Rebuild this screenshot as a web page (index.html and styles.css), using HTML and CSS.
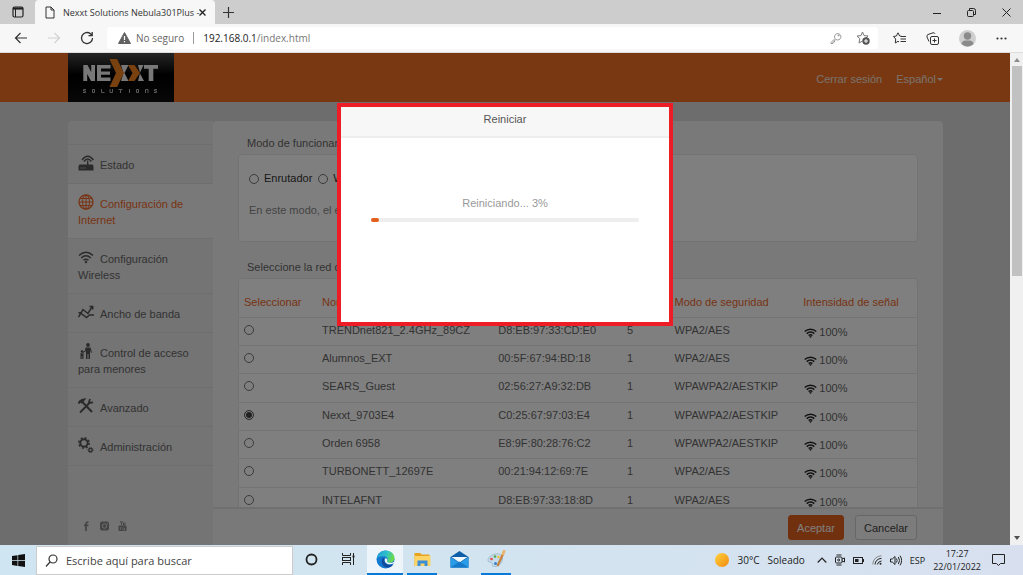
FILE: index.html
```html
<!DOCTYPE html>
<html lang="es">
<head>
<meta charset="utf-8">
<title>Nexxt Solutions Nebula301Plus</title>
<link rel="stylesheet" href="styles.css">
</head>
<body>
<svg class="defs" aria-hidden="true">
  <symbol id="wifi" viewBox="0 0 13 10">
    <path d="M.7 3.500C4 .4 9 .4 12.300 3.500M2.700 5.600c2.200-2 5.400-2 7.600 0M4.600 7.500c1.200-1 2.600-1 3.800 0" fill="none" stroke="currentColor" stroke-width="1.500"/>
    <path d="M5 8.300 6.500 10 8 8.300z" fill="currentColor"/>
  </symbol>
</svg>

<header class="tabstrip">
  <button class="strip-btn" aria-label="Menú de pestañas">
    <svg width="12" height="12" viewBox="0 0 12 12" fill="none" stroke="#222"><rect x="1" y="1" width="10" height="10" rx="1.500" stroke-width="1.200"/><path d="M1 2.500h10" stroke-width="2.200"/><path d="M3.500 3v8" stroke-width="1"/></svg>
  </button>
  <div class="tab">
    <svg width="10" height="13" viewBox="0 0 10 13" fill="none" stroke="#333"><path d="M1 1h5l3 3v8H1zM6 1v3h3"/></svg>
    <span class="tab-title">Nexxt Solutions Nebula301Plus -</span>
    <button class="tab-close" aria-label="Cerrar pestaña"><svg width="7" height="7" viewBox="0 0 7 7" stroke="#222" stroke-width="1.400"><path d="M.5.5l6 6M6.500.5l-6 6"/></svg></button>
  </div>
  <button class="new-tab" aria-label="Nueva pestaña"><svg width="11" height="11" viewBox="0 0 11 11" stroke="#333" stroke-width="1.200"><path d="M5.500 0v11M0 5.500h11"/></svg></button>
  <div class="window-buttons">
    <button aria-label="Minimizar"><svg width="8" height="9" viewBox="0 0 8 9" stroke="#222"><path d="M0 5.500h8"/></svg></button>
    <button aria-label="Restaurar"><svg width="9" height="9" viewBox="0 0 9 9" fill="none" stroke="#222"><rect x=".5" y="2.500" width="6" height="6" rx="1"/><path d="M2.500 2V.5h4q2 0 2 2v4H7"/></svg></button>
    <button aria-label="Cerrar"><svg width="9" height="9" viewBox="0 0 9 9" stroke="#222"><path d="M.5.5l8 8M8.500.5l-8 8"/></svg></button>
  </div>
</header>

<nav class="toolbar" aria-label="Navegación">
  <button aria-label="Atrás"><svg width="14" height="12" viewBox="0 0 14 12" fill="none" stroke="#333" stroke-width="1.200"><path d="M13 6H1.500M6.500 1l-5 5 5 5"/></svg></button>
  <button aria-label="Adelante"><svg width="14" height="12" viewBox="0 0 14 12" fill="none" stroke="#d2d2d2" stroke-width="1.200"><path d="M1 6h11.500M7.500 1l5 5-5 5"/></svg></button>
  <button aria-label="Actualizar"><svg width="14" height="14" viewBox="0 0 14 14" fill="none" stroke="#333" stroke-width="1.300"><path d="M12.500 7A5.500 5.500 0 1 1 10.500 2.800L12 4.500M12.200 1v3.700H8.500"/></svg></button>
  <div class="address">
    <svg width="13" height="12" viewBox="0 0 13 12"><path d="M6.500.5 12.500 11.500H.5z" fill="#616161" stroke="#616161" stroke-linejoin="round"/><path d="M6.500 4v4M6.500 9v1.300" stroke="#fff" stroke-width="1.200"/></svg>
    <span class="insecure">No seguro</span>
    <span class="divider"></span>
    <span class="url"><b>192.168.0.1</b>/index.html</span>
    <button class="key" aria-label="Contraseñas"><svg width="12" height="12" viewBox="0 0 12 12" fill="none" stroke="#999"><path d="M5 6.500 1 10.500v1h2v-1.500h1.500V8.500L6 7.500a3.200 3.200 0 1 0-1-1z"/><circle cx="8.600" cy="3.500" r=".6"/></svg></button>
    <button aria-label="Agregar a favoritos"><svg width="14" height="14" viewBox="0 0 14 14"><path d="M6.500 1l1.600 3.600 4 .4-3 2.700M6.500 10 3 12l.8-4.300L1 5l4-.4L6.500 1" fill="none" stroke="#777"/><circle cx="10" cy="10" r="3.700" fill="#555"/><path d="M10 8v4M8 10h4" stroke="#fff"/></svg></button>
  </div>
  <button class="tool" aria-label="Favoritos"><svg width="13" height="13" viewBox="0 0 13 13" fill="none" stroke="#333"><path d="M9 4.500 6.700 4 5 .8 3.400 4 .5 4.500 2.700 7l-.4 4L5 9.300l1 .6M8 4.500h5M7.500 7H13M7.500 9.500H13"/></svg></button>
  <button class="tool" aria-label="Colecciones"><svg width="13" height="13" viewBox="0 0 13 13" fill="none" stroke="#333"><rect x="4.500" y="4.500" width="8" height="8" rx="1.500"/><path d="M8.500 6.500v4M6.500 8.500h4M3 9.500 1 5Q.5 3 2 2.500L7 .8q1.300-.4 2 1"/></svg></button>
  <button class="tool" aria-label="Perfil"><svg width="17" height="17" viewBox="0 0 17 17"><circle cx="8.500" cy="8.500" r="8.500" fill="#cfcfcf"/><circle cx="8.500" cy="6" r="3.700" fill="#8a8a8a"/><path d="M2.500 14q.5-3.500 4-3.500h4q3.500 0 4 3.500a8.500 8.500 0 0 1-12 0z" fill="#8a8a8a"/></svg></button>
  <button class="tool" aria-label="Más"><svg width="11" height="3" viewBox="0 0 11 3" fill="#333"><circle cx="1.500" cy="1.500" r="1.100"/><circle cx="5.500" cy="1.500" r="1.100"/><circle cx="9.500" cy="1.500" r="1.100"/></svg></button>
</nav>

<div class="viewport">
  <div class="page">
    <header class="site-header">
      <div class="logo" role="img" aria-label="Nexxt Solutions">
        <svg width="78" height="38" viewBox="0 0 78 38">
          <g fill="#f0f0f0">
            <path d="M1.300 22V6h4.200l3.700 7V6H13v16H9l-3.800-7v7z"/>
            <path d="M15 6h13.500v3.600H19v2.800h9v3.400h-9v2.700h9.500V22H15z"/>
            <path d="M39 6h7.500l-4 8 4 8H39l2.500-8z"/>
            <path d="M56 6h5.500l-3.700 8 4.200 8h-6l2-8z"/>
            <path d="M62 6h14v3.700h-4.700V22h-4.600V9.700H62z"/>
          </g>
          <path d="M27.500 0H35l7 14-7 14h-7.500l6.500-14z" fill="#f58220"/>
          <path d="M46 6h6.500l5.500 8-5.500 8H46l4.500-8z" fill="#f58220"/>
          <g fill="none" stroke="#b0b0b0" stroke-width="1"><path d="M4 30.500H1.500v1.500h2v1.500H1M10.500 30.500h2v3h-2zM19.500 30v3.500h3M28 30v3.500h2.500V30M36.500 30.500h4M38.500 30.500V34M47.500 30v4M54.500 30.500h2v3h-2zM63.500 34v-3.500h2.500V34M75 30.500h-2.500v1.500h2v1.500H72"/></g>
        </svg>
      </div>
      <nav class="site-links"><a href="#">Cerrar sesión</a><a href="#">Español<i class="caret"></i></a></nav>
    </header>

    <div class="panel">
      <aside class="sidebar">
        <nav class="menu">
          <a href="#"><svg width="16" height="16" viewBox="0 0 16 16"><path d="M1.500 9.500h13l1 1.500v4.500H.5V11zM9 5.500h1.400v5H9z" fill="#555"/><path d="M2.500 13h5" stroke="#ddd" stroke-dasharray="1"/><path d="M6 6.500Q9.700 1.500 13.400 6.500M4 5Q9.700-2.500 15.400 5" stroke="#555" fill="none" stroke-width="1.500"/></svg>Estado</a>
          <a href="#" class="active"><svg width="16" height="16" viewBox="0 0 16 16" fill="none" stroke="#f0682a"><circle cx="8" cy="8" r="7" stroke-width="1.300"/><ellipse cx="8" cy="8" rx="3.500" ry="7"/><path d="M8 1v14M1 8h14M2 4.500h12M2 11.500h12"/></svg>Configuración de Internet</a>
          <a href="#"><svg width="16" height="16" viewBox="0 0 16 16"><path d="M1 6.500q7-6.500 14 0M3.200 9q4.800-4.500 9.600 0M5.500 11.300q2.500-2.200 5 0" fill="none" stroke="#555" stroke-width="1.500"/><circle cx="8" cy="13" r="1.200" fill="#555"/></svg>Configuración Wireless</a>
          <a href="#"><svg width="16" height="16" viewBox="0 0 16 16" fill="none" stroke="#555" stroke-width="1.500"><path d="M.5 13 5 5.500l5 4 4.500-7.500M11.500 2.500h3.200v3M.5 8.500 3 9.500l5.500 4 3-2.500H16"/></svg>Ancho de banda</a>
          <a href="#"><svg width="16" height="16" viewBox="0 0 16 16" fill="#555"><circle cx="10" cy="2" r="1.900"/><path d="M7.500 4.500h5l1.500 5-1 .3-1-2.800V16h-1.500v-5h-1v5H8V8L5 10l-.5-1L7 7.500z"/><circle cx="4" cy="8.500" r="1.300"/><path d="M2.500 10.200h3V16H4.300v-3h-.6v3H2.500z"/></svg>Control de acceso para menores</a>
          <a href="#"><svg width="16" height="16" viewBox="0 0 16 16" fill="none" stroke="#555"><path d="M4 3.500 14 14" stroke-width="2"/><path d="M.5 5.500Q2 2 6 1.500L3 5" stroke-width="2"/><path d="M2 14.500 11 5.500" stroke-width="1.800"/><path d="M12 1 10.700 5l4.300-.7" stroke-width="1.800"/></svg>Avanzado</a>
          <a href="#"><svg width="16" height="16" viewBox="0 0 16 16" fill="none" stroke="#555"><circle cx="6" cy="6" r="3.700" stroke-width="2"/><circle cx="6" cy="6" r="5.200" stroke-width="1.500" stroke-dasharray="2 2.080"/><circle cx="12.500" cy="13" r="1.700" stroke-width="1.300"/><circle cx="12.500" cy="13" r="2.500" stroke-dasharray="1 .96"/></svg>Administración</a>
        </nav>
        <div class="social">
          <a href="#" aria-label="Facebook"><svg width="9" height="10" viewBox="0 0 9 10" fill="none" stroke="#888" stroke-width="1.700"><path d="M4 10V3Q4 1 6.500 1M2 4.300h4.500"/></svg></a>
          <a href="#" aria-label="Instagram"><svg width="9" height="10" viewBox="0 0 9 10"><rect y=".5" width="9" height="9" rx="2" fill="#888"/><circle cx="4.500" cy="5" r="2.200" fill="none" stroke="#ddd"/><circle cx="7.200" cy="2.500" r=".6" fill="#ddd"/></svg></a>
          <a href="#" aria-label="YouTube"><svg width="9" height="10" viewBox="0 0 9 10"><rect x=".5" y="4.500" width="8" height="5.500" rx="1" fill="#888"/><path d="M2.500 0 3.500 2.500V4M4.500 0l-1 2.500M5.500 1.500V4H7V1.500" stroke="#888" fill="none"/><path d="M2.500 6v3M5 6v3h1.500V7" stroke="#ddd" fill="none" stroke-width=".7"/></svg></a>
        </div>
      </aside>

      <main class="content">
        <div class="scroll">
          <h2>Modo de funcionamiento</h2>
          <section class="card mode">
            <div class="radios">
              <label><input type="radio" name="mode">Enrutador</label>
              <label><input type="radio" name="mode">WISP</label>
            </div>
            <p>En este modo, el enrutador</p>
          </section>
          <h2>Seleccione la red deseada</h2>
          <section class="card">
            <table>
              <colgroup><col class="c-select"><col class="c-name"><col class="c-mac"><col class="c-channel"><col class="c-mode"><col></colgroup>
              <thead><tr><th>Seleccionar</th><th>Nombre</th><th>MAC</th><th>Canal</th><th>Modo de seguridad</th><th>Intensidad de señal</th></tr></thead>
              <tbody>
                <tr><td><input type="radio" name="net" aria-label="TRENDnet821_2.4GHz_89CZ"></td><td>TRENDnet821_2.4GHz_89CZ</td><td>D8:EB:97:33:CD:E0</td><td>5</td><td>WPA2/AES</td><td class="signal"><svg><use href="#wifi"/></svg>100%</td></tr>
                <tr><td><input type="radio" name="net" aria-label="Alumnos_EXT"></td><td>Alumnos_EXT</td><td>00:5F:67:94:BD:18</td><td>1</td><td>WPA2/AES</td><td class="signal"><svg><use href="#wifi"/></svg>100%</td></tr>
                <tr><td><input type="radio" name="net" aria-label="SEARS_Guest"></td><td>SEARS_Guest</td><td>02:56:27:A9:32:DB</td><td>1</td><td>WPAWPA2/AESTKIP</td><td class="signal"><svg><use href="#wifi"/></svg>100%</td></tr>
                <tr><td><input type="radio" name="net" aria-label="Nexxt_9703E4" checked></td><td>Nexxt_9703E4</td><td>C0:25:67:97:03:E4</td><td>1</td><td>WPAWPA2/AESTKIP</td><td class="signal"><svg><use href="#wifi"/></svg>100%</td></tr>
                <tr><td><input type="radio" name="net" aria-label="Orden 6958"></td><td>Orden 6958</td><td>E8:9F:80:28:76:C2</td><td>1</td><td>WPAWPA2/AESTKIP</td><td class="signal"><svg><use href="#wifi"/></svg>100%</td></tr>
                <tr><td><input type="radio" name="net" aria-label="TURBONETT_12697E"></td><td>TURBONETT_12697E</td><td>00:21:94:12:69:7E</td><td>1</td><td>WPA2/AES</td><td class="signal"><svg><use href="#wifi"/></svg>100%</td></tr>
                <tr><td><input type="radio" name="net" aria-label="INTELAFNT"></td><td>INTELAFNT</td><td>D8:EB:97:33:18:8D</td><td>1</td><td>WPA2/AES</td><td class="signal"><svg><use href="#wifi"/></svg>100%</td></tr>
              </tbody>
            </table>
          </section>
        </div>
        <footer class="actions">
          <button class="btn primary">Aceptar</button>
          <button class="btn">Cancelar</button>
        </footer>
      </main>
    </div>

    <div class="overlay">
      <div class="modal" role="dialog" aria-labelledby="dlg-title">
        <h1 id="dlg-title">Reiniciar</h1>
        <div class="modal-body">
          <p>Reiniciando... 3%</p>
          <div class="progress"><div class="bar" style="width:3%"></div></div>
        </div>
      </div>
    </div>
  </div>
  <div class="scrollbar">
    <svg width="6" height="4" viewBox="0 0 6 4"><path d="M0 4 3 0l3 4z" fill="#8c8c8c"/></svg>
    <div class="track"><div class="thumb"></div></div>
    <svg width="6" height="4" viewBox="0 0 6 4"><path d="M0 0 3 4l3-4z" fill="#505050"/></svg>
  </div>
</div>

<footer class="taskbar">
  <button class="start" aria-label="Inicio"><svg width="13" height="13" viewBox="0 0 13 13" fill="#111"><path d="M0 2 5.500 1.200v5H0zM6.200 1.100 13 0v6.200H6.200zM0 6.900h5.500v5L0 11.100zM6.200 6.900H13V13l-6.800-1z"/></svg></button>
  <label class="search">
    <svg width="13" height="13" viewBox="0 0 13 13" fill="none" stroke="#333" stroke-width="1.200"><circle cx="8" cy="5" r="4"/><path d="M5 8 1 12.500"/></svg>
    <input type="text" placeholder="Escribe aquí para buscar" aria-label="Buscar">
  </label>
  <div class="apps">
    <button class="app" aria-label="Cortana"><svg width="13" height="13" viewBox="0 0 13 13" fill="none" stroke="#222" stroke-width="1.800"><circle cx="6.500" cy="6.500" r="5"/></svg></button>
    <button class="app" aria-label="Vista de tareas"><svg width="13" height="12" viewBox="0 0 13 12" fill="none" stroke="#222"><path d="M.5 0v2.500h8V0M.5 12V9.500h8V12M11.500 0v12"/><rect x=".5" y="4.500" width="8" height="3"/><path d="M10.500 3.500h2" stroke-width="2"/></svg></button>
    <button class="app open current" aria-label="Microsoft Edge"><svg width="19" height="19" viewBox="0 0 19 19"><defs><linearGradient id="eg" x1="0" y1="0" x2="1" y2=".3"><stop offset="0" stop-color="#2196dc"/><stop offset=".6" stop-color="#2fc2c8"/><stop offset="1" stop-color="#69d94c"/></linearGradient></defs><circle cx="9.500" cy="9.500" r="9" fill="#1478cf"/><path d="M.6 8.800C1.500 3.500 5 .5 9.700.5c5 0 8.800 3.700 8.800 7.500 0 3-2.300 4.700-5 4.700-2 0-3-.8-2.400-1.600 1.300-1.800.4-4.600-2.700-4.900C4.700 5.900 1.500 7 .6 8.800z" fill="url(#eg)"/><path d="M6.800 8C4 12 7 17.200 11.500 17.500c2.600.1 4.700-1 6-3.500-3 1.600-7.200 1-8.700-1.500-.9-1.500-.7-3-.1-3.900z" fill="#134a9e"/><path d="M9.300 8.300C8.300 10 8.500 12.300 11 13.700c2.200 1 4.900.8 7-.5l.8-2c-1.500 1.300-3.300 1.800-5.300 1.500-2-.2-3-.8-2.400-1.600.8-1.200 0-2.800-1.800-2.800z" fill="#eef6fa"/></svg></button>
    <button class="app open" aria-label="Explorador de archivos"><svg width="17" height="15" viewBox="0 0 17 15"><path d="M.5 1h6l1 1.500h8V14H.5z" fill="#e8a420"/><path d="M.5 4h16v10H.5z" fill="#fdd566"/><path d="M3.500 14V8.500h10V14h-3v-2.500h-4V14z" fill="#3a8fd8"/></svg></button>
    <button class="app" aria-label="Correo"><svg width="19" height="17" viewBox="0 0 19 17"><path d="M.5 6 9.500 0l9 6v10.500H.5z" fill="#0f5ea8"/><path d="M.5 6l9 6 9-6v10.500H.5z" fill="#2a9be6"/><path d="M1.500 6h16L9.500 11.500z" fill="#f2f9fd"/><path d="M.5 16.500 9.500 10.500l9 6z" fill="#1679c9"/></svg></button>
    <button class="app open" aria-label="Paint"><svg width="19" height="18" viewBox="0 0 19 18"><path d="M8 4c5-1 8 1.500 7.500 5.500S11 17 6.500 16.500C4 16 6.500 13 4.500 12.500S.5 12 1 9.500 4 5 8 4z" fill="#c5dcec" stroke="#89a9c0" stroke-width=".6"/><circle cx="4.500" cy="9" r="1.300" fill="#e34f45"/><circle cx="8" cy="6.500" r="1.300" fill="#57a74a"/><circle cx="11.500" cy="7" r="1.200" fill="#f0c22e"/><circle cx="8.500" cy="13.500" r="1.500" fill="#3b7fc8"/><path d="M16.500 3 10.500 16" stroke="#c5813d" stroke-width="2.200"/><path d="M17.500 0 15.500 5" stroke="#e9b36c" stroke-width="2.600"/></svg></button>
  </div>
  <div class="tray">
    <svg class="sun" width="14" height="14" viewBox="0 0 14 14"><defs><linearGradient id="sg" x1="0" y1="0" x2="1" y2="1"><stop stop-color="#ffd23c"/><stop offset="1" stop-color="#f28a12"/></linearGradient></defs><circle cx="7" cy="7" r="7" fill="url(#sg)"/></svg>
    <span class="weather"><span>30°C</span><span>Soleado</span></span>
    <svg width="10" height="6" viewBox="0 0 10 6" fill="none" stroke="#222" stroke-width="1.200"><path d="M.7 5.500 5 1l4.300 4.500"/></svg>
    <svg width="10" height="12" viewBox="0 0 10 12" fill="none" stroke="#222"><rect x=".5" y="3" width="6.500" height="6" rx="1"/><path d="M7 5l2.500-1v4L7 7M1.500 1h5M1.500 11h5"/><circle cx="3.700" cy="6" r="1"/></svg>
    <svg width="11" height="7" viewBox="0 0 11 7"><rect x=".5" y=".5" width="9" height="6" fill="none" stroke="#222"/><path d="M2 2h3.500v3H2zM10 2h1v3h-1z" fill="#222"/></svg>
    <svg width="10" height="10" viewBox="0 0 10 10" fill="none"><path d="M.7 9.500Q1.500 1.500 9.500.7" stroke="#888"/><path d="M3 9.500Q3.500 4 9.500 3.300M5.300 9.500q.5-3 4.200-3.500" stroke="#222"/><circle cx="8.500" cy="8.700" r="1" fill="#222"/></svg>
    <svg width="12" height="11" viewBox="0 0 12 11" fill="none" stroke="#222"><path d="M.5 4v3h1.800L5 9.500v-8L2.300 4zM6.500 3.500q1.300 2 0 4M8.300 2q2.500 3.500 0 7M10 .7q3.300 4.800 0 9.600"/></svg>
    <span class="lang">ESP</span>
    <time class="clock"><span>17:27</span><span>22/01/2022</span></time>
    <button class="notify" aria-label="Notificaciones"><svg width="13" height="12" viewBox="0 0 13 12" fill="none" stroke="#222"><path d="M.5.500h12v9H8.500L6.500 11.500l-2-2h-4z"/></svg></button>
  </div>
</footer>
</body>
</html>
```

FILE: styles.css
```css
* { box-sizing: border-box; }

body {
  margin: 0;
  height: 100vh;
  display: flex;
  flex-direction: column;
  overflow: hidden;
  font-family: "Open Sans", "Noto Sans", sans-serif;
  font-size: 11px;
  color: #333;
}

button {
  padding: 0;
  border: 0;
  background: none;
  font: inherit;
  color: inherit;
}

svg { display: block; flex: none; }
a { color: inherit; text-decoration: none; }
h1, h2, p { margin: 0; font-weight: normal; }
.defs { position: absolute; width: 0; height: 0; }

/* Browser tabs */
.tabstrip {
  display: flex;
  align-items: center;
  height: 24px;
  background: #cdcdcd;
}
.strip-btn { width: 35px; display: flex; justify-content: center; }
.tab {
  display: flex;
  align-items: center;
  gap: 8px;
  width: 180px;
  height: 24px;
  padding: 0 9px 0 10px;
  border-radius: 4px 4px 0 0;
  background: #f7f7f7;
}
.tab-title {
  flex: 1;
  white-space: nowrap;
  font-size: 9px;
}
.tab-close { margin-left: -8px; }
.new-tab { margin-left: 8px; }
.window-buttons { margin-left: auto; display: flex; gap: 26px; padding-right: 12px; }

/* Browser toolbar */
.toolbar {
  display: flex;
  align-items: center;
  height: 29px;
  padding: 0 16px 0 14px;
  gap: 19px;
  background: #f7f7f7;
  border-bottom: 1px solid #ddd;
}
.address {
  flex: 1;
  display: flex;
  align-items: center;
  height: 22px;
  margin-left: -6px;
  padding: 0 8px 0 11px;
  border-radius: 3px;
  background: #fff;
  font-size: 10px;
}
.insecure { margin-left: 5px; color: #666; }
.divider { width: 1px; height: 12px; margin: 0 9px; background: #999; }
.url { color: #777; }
.url b { font-weight: normal; color: #222; }
.key { margin: 0 14px 0 auto; }
.address + .tool { margin-left: -4px; }
.tool + .tool { margin-left: 1px; }

/* Router page */
.viewport { flex: 1; min-height: 0; display: flex; }
.page {
  position: relative;
  flex: 1;
  display: flex;
  flex-direction: column;
  background: #dadada;
  font-family: "Liberation Sans", Arial, sans-serif;
  color: #666;
}
.site-header {
  display: flex;
  justify-content: space-between;
  height: 49px;
  padding: 0 67px 0 68px;
  background: #f27022;
}
.logo {
  display: flex;
  justify-content: center;
  width: 106px;
  padding-top: 6px;
  background: linear-gradient(#4a4a4a, #000 45%, #101010);
}
.site-links { display: flex; align-items: center; gap: 14px; color: #f4e4dc; padding-top: 2px; }
.caret {
  display: inline-block;
  margin-left: 1px;
  border: 3px solid transparent;
  border-top-color: currentColor;
  border-bottom: 0;
  vertical-align: middle;
}

.panel { flex: 1; min-height: 0; display: flex; margin: 19px 67px 0 68px; }
.sidebar {
  display: flex;
  flex-direction: column;
  width: 145px;
  padding-top: 23px;
  background: #e8e8e8;
  border-radius: 4px 0 0 0;
}
.menu { border-top: 1px solid #dcdcdc; }
.menu a {
  display: block;
  padding: 12px 10px 10px;
  border-bottom: 1px solid #dcdcdc;
  line-height: 16px;
}
.menu svg { display: inline-block; margin: -2px 6px 0 0; vertical-align: -2px; }
.menu .active { background: #f3f3f3; color: #f0682a; }
.social { display: flex; gap: 9px; margin: auto 0 14px 14px; }

.content {
  flex: 1;
  min-width: 0;
  display: flex;
  flex-direction: column;
  background: #f3f3f3;
  border-radius: 4px 4px 0 0;
}
.scroll { flex: 1; min-height: 0; overflow: hidden; padding: 0 25px; }
.scroll h2 { padding: 15px 9px 4px; font-size: 11px; line-height: 14px; }
.card { background: #fff; border: 1px solid #e6e6e6; border-radius: 4px; overflow: hidden; }
.mode { padding: 16px 10px 23px; line-height: 15px; color: #333; margin-bottom: 3px; }
.mode p { margin-top: 17px; color: #888; }
.radios { display: flex; gap: 6px; }
.radios label { display: flex; align-items: center; gap: 5px; }

input[type="radio"] {
  appearance: none;
  display: block;
  width: 10px;
  height: 10px;
  margin: 0;
  border: 1px solid #767676;
  border-radius: 50%;
  background: #fff;
}
input[type="radio"]:checked {
  background: #444;
  border-color: #666;
  box-shadow: inset 0 0 0 1px #fff;
}

table { width: 100%; height: 237px; table-layout: fixed; border-collapse: collapse; }
.c-select { width: 11.5%; }
.c-name { width: 26%; }
.c-mac { width: 19%; }
.c-channel { width: 7%; }
.c-mode { width: 19%; }
th, td { padding: 0 5px; text-align: left; white-space: nowrap; border-bottom: 1px solid #e8e8e8; line-height: 14px; }
td { padding-bottom: 3px; }
th { height: 38px; padding-top: 8px; font-weight: normal; color: #f0682a; }
td.signal { padding: 1px 5px 0; }
.signal svg { display: inline-block; width: 13px; height: 10px; margin: 0 2px 0 1px; vertical-align: -2px; color: #222; }

.actions {
  display: flex;
  justify-content: flex-end;
  gap: 11px;
  padding: 6px 26px 5px;
  border-top: 2px solid #e0e0e0;
}
.btn {
  height: 25px;
  padding: 0 8px;
  border: 1px solid #cfcfcf;
  border-radius: 3px;
  background: #f8f8f8;
  color: #444;
}
.primary { border-color: #e2601c; background: #e2601c; color: #fff; }

/* Restart dialog */
.overlay {
  position: absolute;
  inset: 0;
  display: flex;
  justify-content: center;
  align-items: flex-start;
  padding-top: 50px;
  background: rgba(0, 0, 0, 0.5);
}
.modal { width: 336px; border: 4px solid #ee1c24; background: #fff; }
.modal h1 {
  padding: 5px 0 10px;
  border-bottom: 2px solid #eee;
  background: #f7f7f7;
  color: #555;
  font-size: 11px;
  line-height: 14px;
  text-align: center;
}
.modal-body { padding: 57px 30px 100px; }
.modal-body p { line-height: 16px; text-align: center; color: #999; }
.progress { margin-top: 7px; border-radius: 2px; background: #eee; }
.bar { height: 4px; border-radius: 2px; background: #e2601c; }

.scrollbar {
  display: flex;
  flex-direction: column;
  align-items: center;
  gap: 4px;
  width: 13px;
  padding: 5px 0;
  background: #f0f0f0;
}
.track { flex: 1; width: 10px; }
.thumb { height: 45%; background: #c1c1c1; }

/* Taskbar */
.taskbar {
  display: flex;
  align-items: center;
  height: 30px;
  background: linear-gradient(to right, #cfe5f1, #d2e4f0 50%, #d8e0ef);
}
.start { width: 36px; display: flex; justify-content: center; }
.search {
  display: flex;
  align-items: center;
  gap: 8px;
  width: 257px;
  height: 29px;
  padding: 0 8px;
  border: 1px solid #ccc;
  background: #fff;
}
.search input { flex: 1; border: 0; outline: 0; padding: 0; background: none; font: inherit; }
.search input::placeholder { color: #444; opacity: 1; }
.apps { display: flex; height: 30px; }
.app {
  width: 37px;
  display: flex;
  align-items: center;
  justify-content: center;
  border-bottom: 2px solid transparent;
}
.open { border-bottom-color: #0a7ad6; }
.app.open { width: 30px; margin: 0 4px 0 3px; }
.app.current { width: 36px; margin: 0 1px 0 0; background: #edf5fa; }
.tray { display: flex; align-items: center; gap: 8px; margin-left: auto; padding-right: 18px; color: #222; }
.weather { display: flex; gap: 8px; margin-right: 4px; font-size: 10px; }
.lang { font-size: 9px; }
.clock { display: flex; flex-direction: column; text-align: center; font-size: 9px; line-height: 13px; }
.notify { margin-left: 3px; }
```
